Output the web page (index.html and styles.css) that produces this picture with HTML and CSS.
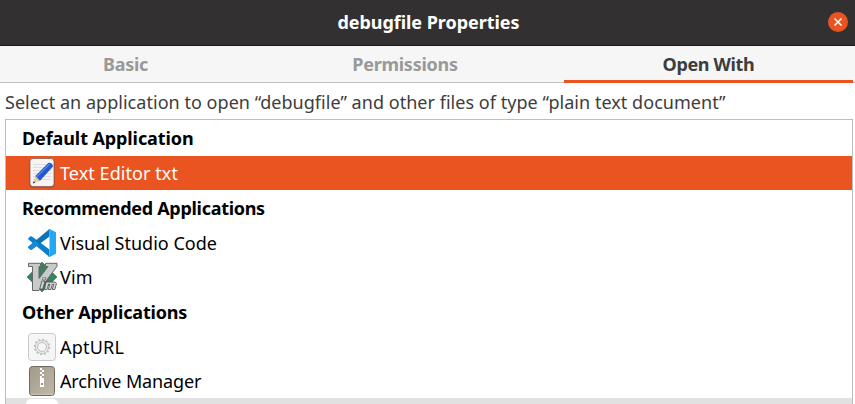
FILE: index.html
```
<!DOCTYPE html>
<html lang="en">
<head>
<meta charset="utf-8">
<title>debugfile Properties</title>
<link rel="stylesheet" href="styles.css">
</head>
<body>
<div class="window">
  <header class="titlebar">
    <h1 class="t-title">debugfile Properties</h1>
    <button class="close" aria-label="Close"><svg width="20" height="20" viewBox="0 0 20 20"><circle cx="10" cy="10" r="10" fill="#e95420"/><path d="M6.500 6.500l7 7M13.500 6.500l-7 7" stroke="#fff" stroke-width="1.500"/></svg></button>
  </header>
  <nav class="tabs">
    <div class="tab"><span class="t-basic">Basic</span></div>
    <div class="tab"><span class="t-perm">Permissions</span></div>
    <div class="tab active"><span class="t-open">Open With</span></div>
  </nav>
  <p class="prompt"><span class="t-prompt">Select an application to open “debugfile” and other files of type “plain text document”</span></p>
  <main class="list">
    <h2><span class="t-default">Default Application</span></h2>
    <div class="row selected">
      <svg class="icon" width="32" height="32" viewBox="0 0 32 32"><rect x="3.500" y="1.500" width="25" height="29" rx="3.500" fill="#a43a17"/><rect x="4" y="1.500" width="24" height="28" rx="3" fill="#f5f4f3" stroke="#8a6658" stroke-width=".8"/><path d="M7 7.500h18M7 10.500h18M7 13.500h18M7 16.500h18M7 19.500h18M7 22.500h18" stroke="#dedddd"/><path d="M9.300 19l5 4.500-7 3z" fill="#edc9a2"/><path d="M7 26.500l.7-2.200 1.500 1.300z" fill="#222"/><path d="M9.300 19L22.500 5.800q4-.3 4.500 3.700L14 23.700z" fill="#2458cf"/><path d="M10.500 20L23.500 7" stroke="#4f85ec" stroke-width="1.500"/></svg>
      <span class="t-text">Text Editor txt</span>
    </div>
    <h2><span class="t-rec">Recommended Applications</span></h2>
    <div class="row">
      <svg class="icon" width="32" height="32" viewBox="0 0 32 32"><path d="M2.200 11.200L4.500 9.300 6 9.500 23.500 22.500V30L2.200 12.300z" fill="#0a80cc"/><path d="M2.200 20.800l2.300 1.900 1.500-.2L23.500 9.500V2L2.200 19.700z" fill="#0873b6"/><path d="M2.200 20.800l2.300 1.900 1.500-.2 7.300-5.500-3.800-3.300-7.300 6z" fill="#168bd7"/><path d="M23.500 2L30 5.200v21.600L23.500 30l-1.500-.8 1.500-1.200V4L22 2.800z" fill="#25a8f3"/></svg>
      <span class="t-vs">Visual Studio Code</span>
    </div>
    <div class="row">
      <svg class="icon" width="32" height="32" viewBox="0 0 32 32"><path d="M16 1l15 15-15 15L1 16z" fill="#39815f" stroke="#5c8270" stroke-width=".8"/><path d="M2.500 2.300h12v3.200H13v12L22 5.500h-2.500V2.300H31v3L13 29.500H6.500v-24h-4z" fill="#c9caca" stroke="#666" stroke-width="1"/><path d="M15.800 20h3.200l-2.300 8h-3zM20 21h9l1.500 1.500-1.700 6h-2.600l1.500-5.300h-1.300l-1.500 5.300h-2.600l1.500-5.300h-1.200l-1.500 5.300h-2.700z" fill="#d2d3d2" stroke="#454b48" stroke-width=".8"/><path d="M16.800 16.600H20l-.7 2.200h-3z" fill="#ddd" stroke="#555" stroke-width=".6"/></svg>
      <span class="t-vim">Vim</span>
    </div>
    <h2><span class="t-other">Other Applications</span></h2>
    <div class="row">
      <svg class="icon" width="32" height="32" viewBox="0 0 32 32"><rect x="2.500" y="2.500" width="27" height="27" rx="3" fill="#f5f5f5" stroke="#c9c9c9"/><circle cx="16" cy="16" r="7.500" fill="none" stroke="#bebebe" stroke-width="1.500" stroke-dasharray="1.960 1.960"/><circle cx="16" cy="16" r="6.500" fill="#f1f1f1" stroke="#c2c2c2"/><circle cx="16" cy="16" r="4.500" fill="#f5f5f5" stroke="#bcbcbc"/></svg>
      <span class="t-apt">AptURL</span>
    </div>
    <div class="row">
      <svg class="icon" width="32" height="32" viewBox="0 0 32 32"><defs><linearGradient id="zip" x2="1" y2="1"><stop stop-color="#a39a89"/><stop offset="1" stop-color="#bfb8a8"/></linearGradient></defs><rect x="3.500" y="1.500" width="25" height="29" rx="3" fill="url(#zip)" stroke="#716a5e"/><path d="M5 29.200h22" stroke="#cec7b9"/><path d="M14 3h2v2h-2zM16 5h2v2h-2zM14 7h2v2h-2zM16 9h2v2h-2zM14 11h2v2h-2zM14 13h4v9h-4z" fill="#fff"/><path d="M15.200 18h1.700v2h-1.700z" fill="#837b6e"/></svg>
      <span class="t-arch">Archive Manager</span>
    </div>
    <div class="row next"><svg class="icon" width="32" height="32" viewBox="0 0 32 32"><rect width="32" height="32" rx="5" fill="#fff"/></svg></div>
  </main>
</div>
</body>
</html>
```
FILE: styles.css
```
* { box-sizing: border-box; }
body { margin: 0; background: #fff; font: 18px/26px "Noto Sans", sans-serif; overflow: hidden; }
h1, h2, p { margin: 0; font-size: inherit; white-space: nowrap; }
.window { height: 404px; display: flex; flex-direction: column; overflow: hidden; }
.titlebar { flex: none; height: 46px; display: grid; grid-template-columns: 1fr auto 1fr; align-items: center; background: #333031; border-bottom: 1px solid #1d1b1c; color: #fff; padding: 0 7px 1px 9px; }
.titlebar h1 { grid-column: 2; }
.close { justify-self: end; border: 0; padding: 0; width: 20px; height: 20px; background: none; display: flex; }
.tabs { flex: none; height: 37px; display: grid; grid-template-columns: 251px 313px 289px; background: #f6f6f6; border-bottom: 1px solid #bdbdbd; color: #999; font-weight: 700; }
.tab { height: 37px; display: flex; justify-content: center; padding-top: 5px; white-space: nowrap; }
.tab:nth-child(2) { padding-right: 5px; }
.tab.active { color: #3d3d3d; border-bottom: 3px solid #e95420; }
.prompt { flex: none; height: 36px; padding: 6px 0 0 5px; color: #3d3d3d; }
.list { flex: none; height: 285px; margin: 0 2px 0 5px; border: 1px solid #bdbdbd; border-bottom: 0; overflow: hidden; color: #000; }
.list h2 { height: 36px; padding: 5px 0 0 16px; }
.row { height: 34px; display: flex; align-items: center; padding-left: 20px; gap: 2px; white-space: nowrap; }
.icon { flex: none; display: block; }
.selected { background: #e95420; color: #fff; }
.next { background: #e1e1e1; }
.t-title { letter-spacing: -.04px; }
.t-basic { letter-spacing: -.3px; }
.t-perm { letter-spacing: -.26px; }
.t-open { letter-spacing: -.36px; }
.t-prompt { letter-spacing: .036px; }
.t-default { letter-spacing: -.1px; }
.t-rec { letter-spacing: -.3px; }
.t-other { letter-spacing: -.18px; }
.t-text { letter-spacing: .07px; }
.t-vim, .t-apt { letter-spacing: .2px; }
.t-arch { letter-spacing: -.13px; }
```
